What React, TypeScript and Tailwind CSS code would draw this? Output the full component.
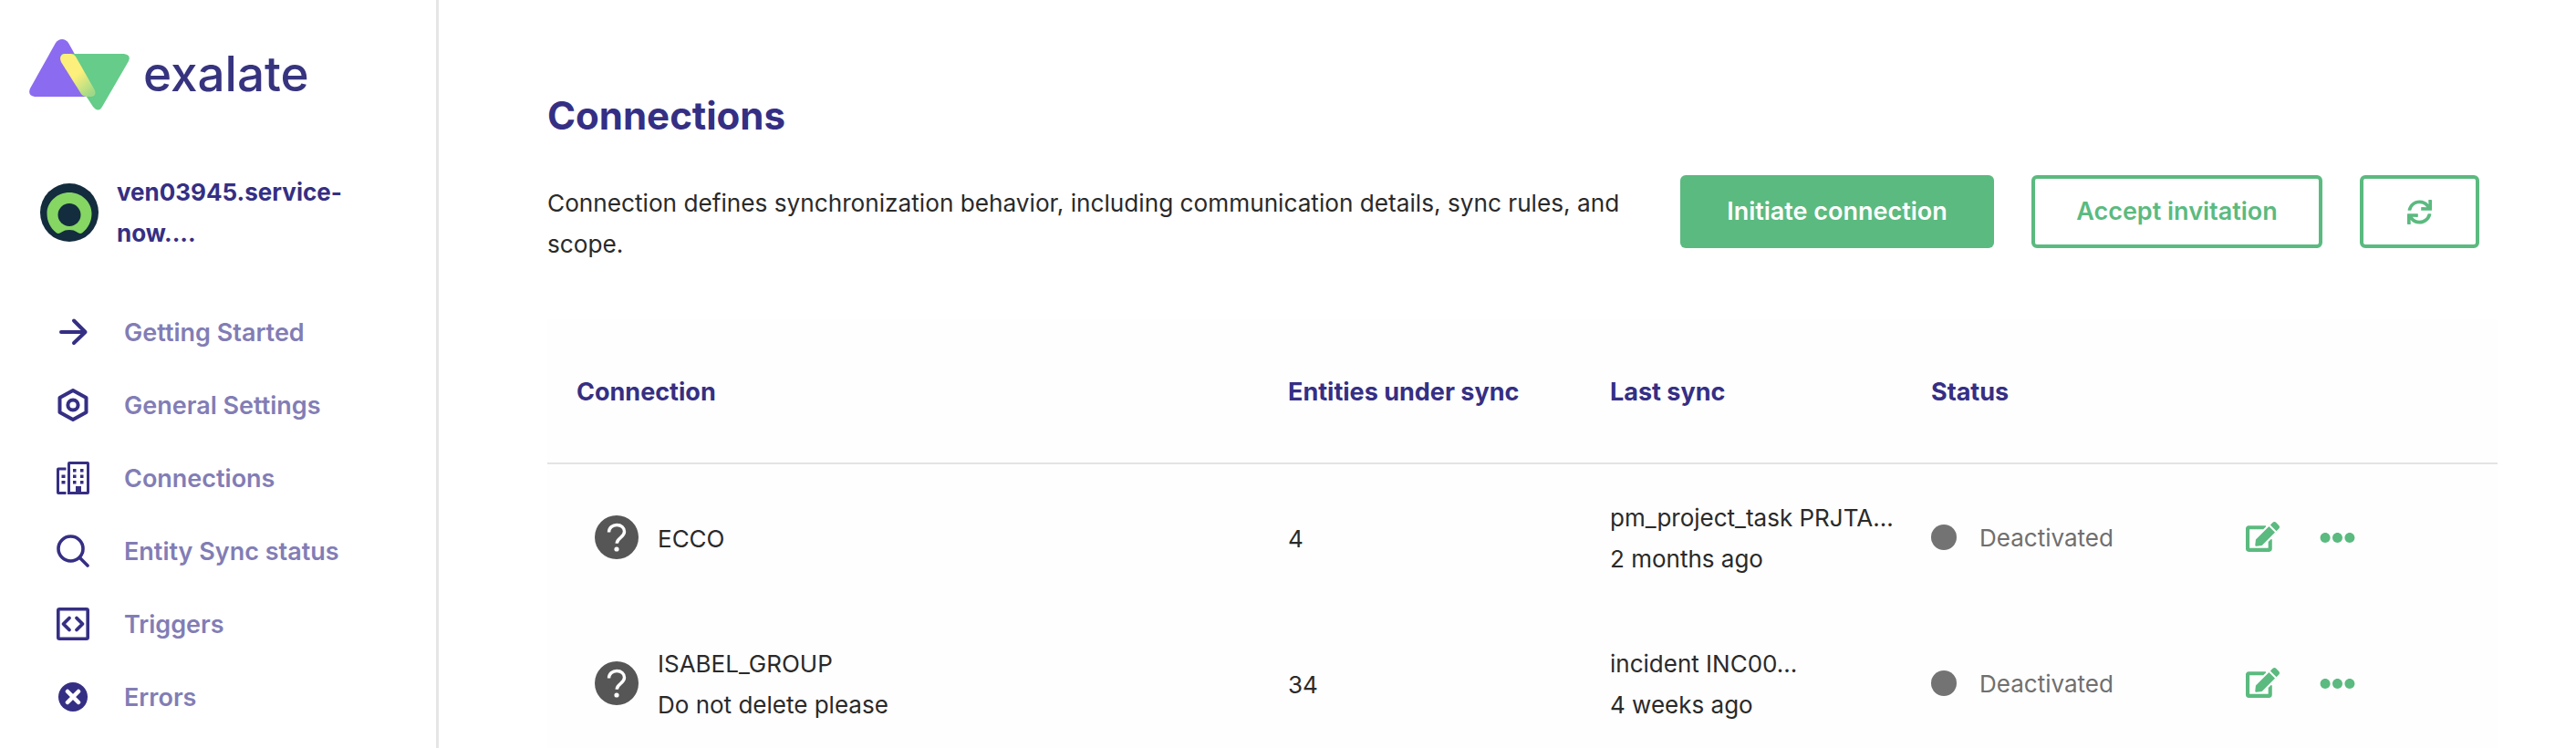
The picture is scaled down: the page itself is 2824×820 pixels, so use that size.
import React from "react";
import { FaEdit, FaEllipsisH, FaSync } from "react-icons/fa";

const iconCls = "w-[36px] h-[36px] text-[#352f84]";

function ArrowI() {
  return (
    <svg viewBox="0 0 36 36" className={iconCls} fill="none" stroke="currentColor" strokeWidth="4" strokeLinecap="round" strokeLinejoin="round">
      <path d="M5 18H31M19 5.500L31.500 18L19 30" />
    </svg>
  );
}
function HexI() {
  return (
    <svg viewBox="0 0 36 36" className={iconCls} fill="none" stroke="currentColor" strokeWidth="4" strokeLinejoin="round">
      <path d="M18 2L32.500 10V26L18 34L3.500 26V10Z" />
      <circle cx="18" cy="18" r="5.600" />
    </svg>
  );
}
function BuildingI() {
  return (
    <svg viewBox="0 0 36 36" className={iconCls} fill="currentColor">
      <path fillRule="evenodd" d="M12 2a2 2 0 0 1 2-2h20a2 2 0 0 1 2 2v32a2 2 0 0 1-2 2H12V2zM15 3v30h6v-6h6v6h6V3z" />
      <path d="M18 8h3.500v3.500H18zM26 8h3.500v3.500H26zM18 14.500h3.500V18H18zM26 14.500h3.500V18H26zM18 21h3.500v3.500H18zM26 21h3.500v3.500H26z" />
      <path fillRule="evenodd" d="M2 6.500h8.500v3H3v23.500h7.500v3H2a2 2 0 0 1-2-2V8.500a2 2 0 0 1 2-2z" />
      <path d="M5.500 14.500H9.500V18H5.500zM5.500 21H9.500v3.500H5.500z" />
    </svg>
  );
}
function SearchI() {
  return (
    <svg viewBox="0 0 36 36" className={iconCls} fill="none" stroke="currentColor" strokeWidth="3.600" strokeLinecap="round">
      <circle cx="15.500" cy="15.500" r="13.500" />
      <path d="M25.500 25.500L34 34" />
    </svg>
  );
}
function CodeI() {
  return (
    <svg viewBox="0 0 36 36" className={iconCls} fill="none" stroke="currentColor" strokeLinecap="round" strokeLinejoin="round">
      <rect x="1.800" y="1.800" width="32.400" height="32.400" rx="1.500" strokeWidth="3.600" />
      <path d="M14 11.500L7.500 18L14 24.500M22 11.500L28.500 18L22 24.500" strokeWidth="3.800" />
    </svg>
  );
}
function XI() {
  return (
    <svg viewBox="0 0 36 36" className={iconCls}>
      <circle cx="18" cy="18" r="16" fill="currentColor" />
      <path d="M12 12L24 24M24 12L12 24" stroke="#fff" strokeWidth="4.500" strokeLinecap="round" />
    </svg>
  );
}

function Logo() {
  return (
    <svg viewBox="0 0 114 82" className="w-[114px] h-[82px] shrink-0">
      <defs>
        <linearGradient id="yg" x1="0.2" y1="0.2" x2="0.8" y2="1">
          <stop offset="0.4" stopColor="#fcef7c" />
          <stop offset="1" stopColor="#9fd987" />
        </linearGradient>
      </defs>
      <path d="M29 4q3-4 7-4t7 4L76 63H6q-8-1-5-9z" fill="#8b6bf0" />
      <path d="M36 16h68q8 1 5 8l-29 50q-4 7-10 0L40 28q-2-8-4-12z" fill="#65cc8a" />
      <path d="M38 16h8q3 0 5 3l21 37q2 6-4 7h-6q-3 0-5-3L35 25q-3-7 3-9z" fill="url(#yg)" />
    </svg>
  );
}

function Avatar() {
  return (
    <svg viewBox="0 0 64 64" className="w-[64px] h-[64px] shrink-0">
      <circle cx="32" cy="32" r="32" fill="#132c3e" />
      <path d="M32 10C19 10 7.500 20 7.500 33c0 9 4 16 10 21 2 1.500 4 1 6-.5 2.500-1.700 5-2.500 8.500-2.500s6 .8 8.500 2.500c2 1.500 4 2 6 .5 6-5 10-12 10-21C56.500 20 45 10 32 10z" fill="#85d663" />
      <circle cx="32" cy="34.500" r="12.500" fill="#132c3e" />
    </svg>
  );
}

const nav: [React.ReactNode, string][] = [
  [<ArrowI />, "Getting Started"],
  [<HexI />, "General Settings"],
  [<BuildingI />, "Connections"],
  [<SearchI />, "Entity Sync status"],
  [<CodeI />, "Triggers"],
  [<XI />, "Errors"],
];

function Question() {
  return (
    <svg viewBox="0 0 48 48" className="w-[48px] h-[48px] shrink-0">
      <circle cx="24" cy="24" r="24" fill="#565656" />
      <path d="M15.500 18.500c0-5 4-8 8.700-8s8.300 3 8.300 7.300c0 6.500-8.300 6.500-8.300 13" fill="none" stroke="#fff" strokeWidth="3.400" />
      <circle cx="24" cy="37" r="2.600" fill="#fff" />
    </svg>
  );
}

const rows = [
  { name: "ECCO", sub: "", count: "4", l1: "pm_project_task PRJTA...", l2: "2 months ago" },
  { name: "ISABEL_GROUP", sub: "Do not delete please", count: "34", l1: "incident INC00...", l2: "4 weeks ago" },
];

export default function App() {
  return (
    <div className="flex h-[820px] w-[2824px] overflow-hidden bg-white font-['Inter',sans-serif] antialiased">
      <aside className="w-[481px] shrink-0 border-r-[3px] border-[#e6e6e6] h-full">
        <div className="flex items-center pl-[32px] pt-[43px] h-[125px]">
          <Logo />
          <span className="ml-[11px] mt-[-6px] font-medium text-[53px] leading-none text-[#37347f]">exalate</span>
        </div>
        <div className="flex items-center pl-[44px] mt-[63px] gap-[20px]">
          <Avatar />
          <div className="font-bold text-[26px] leading-[45px] text-[#352f84] w-[280px]">ven03945.service-<br />now....</div>
        </div>
        <nav className="mt-[46px] flex flex-col">
          {nav.map(([icon, label]) => (
            <div key={label} className="flex items-center h-[80px] pl-[62px]">
              {icon}
              <span className="ml-[38px] text-[27px] font-semibold text-[#827db5] leading-none">{label}</span>
            </div>
          ))}
        </nav>
      </aside>
      <main className="flex-1 pl-[119px] pr-[86px]">
        <h1 className="pt-[103px] text-[42px] leading-[48px] font-bold text-[#352f84]">Connections</h1>
        <div className="flex items-start mt-[41px] pr-[20px]">
          <p className="w-[1200px] mt-[8px] text-[26.2px] leading-[45px] text-[#2a2a2a]">
            Connection defines synchronization behavior, including communication details, sync rules, and scope.
          </p>
          <div className="flex ml-auto gap-[41px]">
            <button className="w-[344px] h-[80px] rounded-[6px] bg-[#5bba7f] text-white text-[27px] font-semibold">Initiate connection</button>
            <button className="w-[319px] h-[80px] rounded-[6px] border-[4px] border-[#5bba7f] text-[#5bba7f] text-[27px] font-semibold">Accept invitation</button>
            <button className="w-[131px] h-[80px] rounded-[6px] border-[4px] border-[#5bba7f] text-[#5bba7f] flex items-center justify-center">
              <FaSync className="w-[27px] h-[27px]" />
            </button>
          </div>
        </div>
        <div className="mt-[60px] bg-[#fefefe]">
          <div className="flex items-center h-[159px] border-b-2 border-[#e3e3e3] text-[27px] font-bold text-[#352f84]">
            <div className="w-[812px] pl-[32px] pt-[4px]">Connection</div>
            <div className="w-[353px] pt-[4px]">Entities under sync</div>
            <div className="w-[352px] pt-[4px]">Last sync</div>
            <div className="pt-[4px]">Status</div>
          </div>
          {rows.map((r) => (
            <div key={r.name} className="flex items-center h-[160px] text-[26px] text-[#2a2a2a] leading-[45px]">
              <div className="w-[812px] pl-[52px] flex items-center gap-[21px]">
                <Question />
                <div className="pt-[2px]">
                  <div>{r.name}</div>
                  {r.sub && <div>{r.sub}</div>}
                </div>
              </div>
              <div className="w-[353px] pt-[2px]">{r.count}</div>
              <div className="w-[352px] pt-[2px]">
                <div>{r.l1}</div>
                <div>{r.l2}</div>
              </div>
              <div className="w-[345px] flex items-center gap-[25px] text-[#6f6f6f]">
                <span className="w-[28px] h-[28px] rounded-full bg-[#737373]" />
                <span className="pt-[1px]">Deactivated</span>
              </div>
              <FaEdit className="w-[37px] h-[33px] text-[#5bba7f] mt-[-2px]" />
              <FaEllipsisH className="ml-[44px] w-[39px] h-[39px] text-[#5bba7f]" />
            </div>
          ))}
        </div>
      </main>
    </div>
  );
}
